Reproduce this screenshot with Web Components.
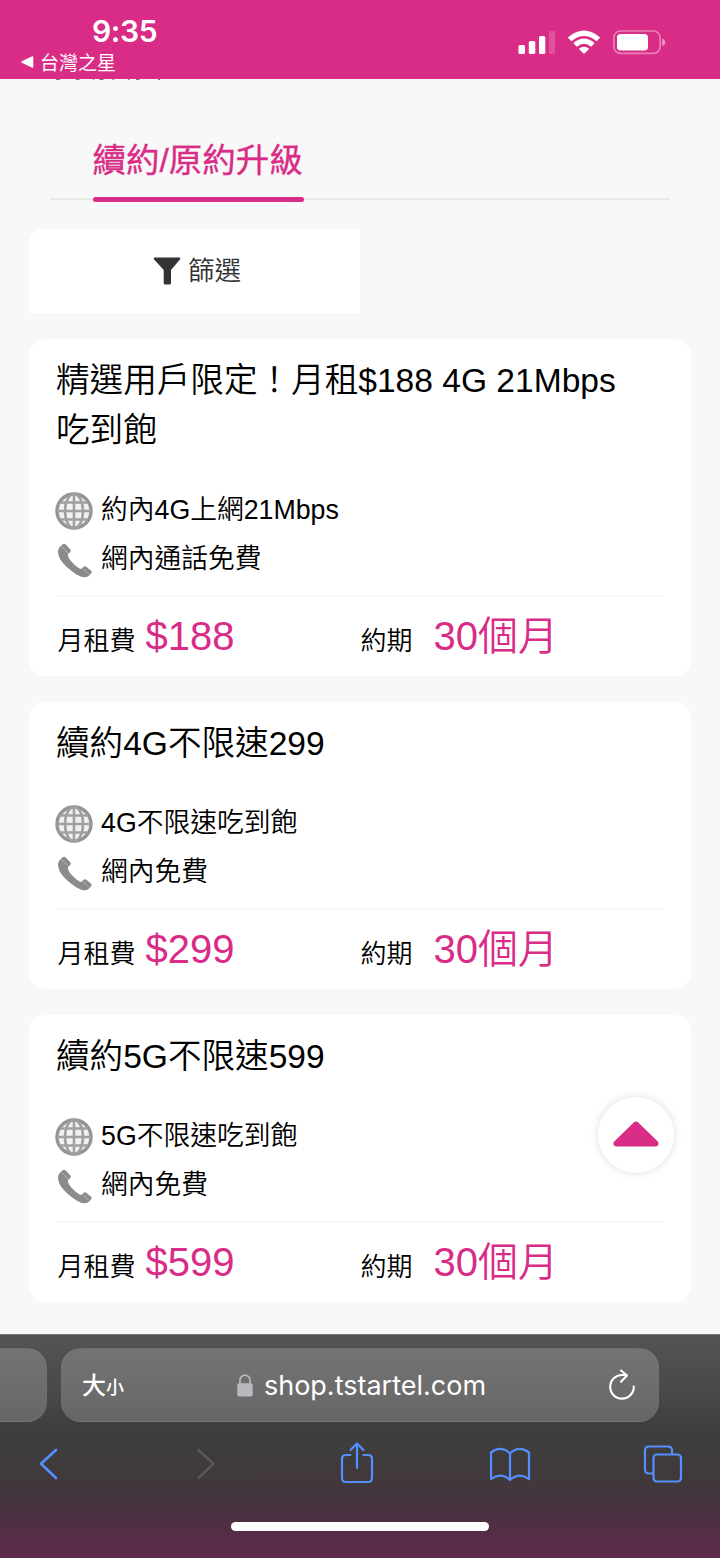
<!DOCTYPE html>
<html lang="zh-Hant">
<head>
<meta charset="utf-8">
<title>台灣之星</title>
<style>
html,body{margin:0;padding:0}
body{width:720px;height:1558px;overflow:hidden;background:#f8f8f8;--pink:#d92c87;font-family:"Liberation Sans","Noto Sans CJK TC",sans-serif;font-weight:350;color:#000}
</style>
</head>
<body>
<phone-screen></phone-screen>
<script>
const define = (name, html) => {
  const t = document.createElement('template');
  t.innerHTML = html;
  customElements.define(name, class extends HTMLElement {
    constructor() { super(); this.attachShadow({mode: 'open'}).append(t.content.cloneNode(true)); }
  });
};

define('status-bar', `<style>
:host{display:flex;justify-content:space-between;box-sizing:border-box;height:79px;background:var(--pink);color:#fff;padding:0 54px 0 20px}
.left{display:flex;flex-direction:column}
.time{font:600 30px/36px Inter,sans-serif;padding:13px 0 0 72px;letter-spacing:-.4px;height:36px}
.back{display:flex;align-items:center;font:400 19px/26px "Noto Sans CJK TC",sans-serif;gap:6px;white-space:nowrap}
.right{display:flex;padding-top:29px}
</style>
<div class="left"><div class="time">9:35</div><div class="back"><svg width="14" height="14" viewBox="0 0 14 14"><path d="M12.600 2v10L2 7z" fill="#fff" stroke="#fff" stroke-width="1.400" stroke-linejoin="round"/></svg><span>台灣之星</span></div></div>
<div class="right"><svg width="148" height="28" viewBox="518 29 148 28" fill="#fff">
<rect x="518.5" y="45" width="6.5" height="9" rx="1.6"/><rect x="528.8" y="41" width="6.5" height="13" rx="1.6"/><rect x="539" y="36" width="6.3" height="18" rx="1.6"/><rect x="549" y="31" width="6" height="23" rx="1.6" opacity=".18"/>
<path d="M567.8 37.6Q584 23.5 600.2 37.6L596.6 41.2Q584 30.9 571.4 41.2zM573.3 43.1Q584 34 594.7 43.1L591.2 46.7Q584 40.8 576.8 46.7zM578.8 48.7Q584 45 589.2 48.7L584.8 53.2Q584 54 583.2 53.2z"/>
<rect x="613.8" y="31" width="46.4" height="22.4" rx="6.8" fill="none" stroke="#fff" stroke-width="1.7" opacity=".4"/><rect x="617" y="34" width="31" height="16.5" rx="3.5"/><path d="M662.2 38.7Q665.3 39.7 665.3 42.3T662.2 46z" opacity=".5"/></svg></div>`);

define('section-tab', `<style>
:host{display:flex;flex-direction:column;margin:0 50px;height:121px;border-bottom:2px solid #e9e9e9;box-sizing:border-box}
.scrolled{display:block;height:2px;flex:none}
.wrap{width:211px;margin:33px 0 0 42.500px;height:88px;flex:none;display:flex;flex-direction:column;justify-content:space-between}
.name{font:400 33.500px/42px "Liberation Sans","Noto Sans CJK TC",sans-serif;-webkit-text-stroke:.35px var(--pink);color:var(--pink);white-space:nowrap;margin-top:26px}
.line{height:5px;border-radius:3px;background:var(--pink)}
</style>
<svg class="scrolled" width="120" height="2" viewBox="50 0 120 2" fill="#222" opacity=".8"><path d="M56 0h4v.8h-4zM76 0h3.500v.8H76zM93 0h1v.8h-1zM99.500 0h4v.8h-4zM112.500 0h1.500v.8h-1.500zM128 0h1.500v.8H128zM136 0h3.500v.8H136zM158 0h2v.8h-2z"/></svg>
<div class="wrap"><div class="name"><slot></slot></div><div class="line"></div></div>`);

define('filter-button', `<style>
:host{display:flex;align-items:center;justify-content:center;width:331px;height:84px;margin:29px 0 0 29px;background:#fff;border-radius:15px 0 0 0;color:#333;font-size:26.5px;line-height:34px;gap:7px;padding-left:5px;box-sizing:border-box}
</style><svg width="28" height="28" viewBox="0 0 28 28"><path d="M1.5.5h25q1.2.3.6 1.7L18 13v13.2q0 1.3-1.3 1.3h-4.6q-1.4 0-1.4-1.3V13L.9 2.2Q.2.9 1.5.5z" fill="#333"/></svg><span><slot></slot></span>`);

define('plan-feature', `<style>
:host{display:flex;align-items:center;height:49px;font-size:26.75px;line-height:46px;white-space:nowrap}
svg{flex:none;margin:4px 8px 0 -1px}
span{padding-top:3px}
.phone,:host([kind=call]) .globe{display:none}:host([kind=call]) .phone{display:block}
</style>
<svg class="globe" width="38" height="38" viewBox="0 0 38 38" fill="none" stroke="#a0a0a0" stroke-width="2.600"><circle cx="19" cy="19" r="17" stroke="#959595" stroke-width="3.400" fill="#f1f1f1"/><ellipse cx="19" cy="19" rx="9" ry="17"/><path d="M19 2v34M2 19h34M5 10.5h28M5 27.5h28"/></svg>
<svg class="phone" width="38" height="38" viewBox="0 0 38 38" fill="#8b8b8b"><path d="M4.3 6.6 7.7 3.3Q9.2 2.2 10.7 3.6L15.3 8.3Q16.5 9.7 15.2 11L13 13.2Q12.300 16 16.800 21Q22.500 27 26 28L29 25.600Q30.200 24.800 31.300 25.800L36.400 30Q37.200 31.300 36 32.500L33.300 35.200Q29 38 21.600 33.500Q10 26 5.300 18.500Q1.400 10.700 4.300 6.600z"/><path d="m6.500 5.500 7.500 7.500M27.500 27.300l6.500 6" stroke="#fff" stroke-width=".8" opacity=".4"/></svg>
<span><slot></slot></span>`);

define('plan-card', `<style>
:host{display:block;box-sizing:border-box;margin:26px 29px 0;padding:17px 27px 0;background:#fff;border-radius:16px;height:287px}
:host([tall]){height:337px}
h2{margin:0 0 28px;padding-right:24px;font-size:33.6px;line-height:50px;font-weight:350}
.foot{display:grid;grid-template-columns:1fr 1fr;height:80px;margin-top:13px;border-top:2px solid #f7f7f7;box-sizing:border-box}
</style><h2><slot name="title"></slot></h2><slot></slot><div class="foot"><slot name="foot"></slot></div>`);

define('plan-value', `<style>
:host{display:flex;align-items:center;height:78px;font-size:40px;line-height:76px;color:var(--pink);white-space:nowrap;padding-left:1.5px}
:host([wide]){padding-left:.5px}
.label{font-size:26px;line-height:36px;color:#000;margin:10px 10px 0 0}
:host([wide]) .label{margin-right:21px}
</style><span class="label"><slot name="label"></slot></span><span><slot></slot></span>`);

define('top-button', `<style>
:host{position:absolute;left:598px;top:1097px;width:76px;height:76px;border-radius:50%;background:#fff;box-shadow:0 0 8px rgba(0,0,0,.14);display:flex;align-items:center;justify-content:center}
svg{margin-top:-3px}
</style><svg width="46" height="26" viewBox="0 0 46 26"><path d="M20.7 1.6Q23-.8 25.3 1.6L45 20.7Q47 24.5 43 25.5H3Q-1 24.5 1 20.7z" fill="#d92c87"/></svg>`);

define('browser-bar', `<style>
:host{display:flex;flex-direction:column;box-sizing:border-box;height:224px;color:#fff;border-top:1px solid #777;background:linear-gradient(#545454 0,#494949 25%,#3e3e3e 43%,#3f3b3c 58%,#45343e 76%,#562c47 90%,#602b4c 100%)}
.tabs{display:flex;gap:14px;margin-top:13px;height:74px}
.prev,.address{box-sizing:border-box;background:linear-gradient(#747474,#666);border:1px solid #7a7a7a66}
.prev{width:47px;border-radius:0 20px 20px 0;border-left:0}
.address{width:598px;border-radius:20px;display:flex;align-items:center;justify-content:space-between;padding:0 22px 0 20px}
.size{font:500 24px/30px "Noto Sans CJK TC",sans-serif;width:60px;white-space:nowrap}.size small{font-size:18px}
.url{display:flex;align-items:center;gap:11px;font:400 27px/36px Inter,sans-serif;letter-spacing:0;margin:2px 0 0 -27px;white-space:nowrap}
.tools{display:flex;height:86px;align-items:center}
.home{width:258px;height:9px;border-radius:5px;background:#fff;margin:14px 0 0 231px}
</style>
<div class="tabs"><div class="prev"></div><div class="address"><span class="size">大<small>小</small></span>
<span class="url"><svg width="16" height="24" viewBox="0 0 16 24"><rect x=".3" y="9.3" width="15.4" height="13.2" rx="2" fill="#bab8bf"/><path d="M3 10V6.2a5 5 0 0 1 10 0V10" fill="none" stroke="#bab8bf" stroke-width="1.7"/></svg><span>shop.tstartel.com</span></span>
<svg width="28" height="34" viewBox="0 0 28 34" fill="none" stroke="#fff" stroke-width="2.1" stroke-linecap="round" stroke-linejoin="round"><path d="M25.8 18.5a11.8 11.8 0 1 1-11.5-11.5h4.5M13 2.5l6 5-6 6.2"/></svg></div></div>
<div class="tools"><svg width="720" height="86" viewBox="0 1422 720 86" fill="none" stroke="#548fff" stroke-width="2.2" stroke-linecap="round" stroke-linejoin="round">
<path d="M56 1450 41 1463.8 56 1478" stroke-width="2.6"/><path d="m198.500 1450 15 13.800-15 14.200" stroke="#5b585a" stroke-width="2.4"/>
<path d="M350.500 1455H346q-4 0-4 4v19q0 4 4 4h22q4 0 4-4v-19q0-4-4-4h-4.500M357 1468v-24.500M350.500 1450l6.500-6.500 6.500 6.500"/>
<path d="M510 1453.500Q501 1445 491 1452.500V1479Q501 1472 510 1480Q519 1472 529 1479V1452.500Q519 1445 510 1453.500V1480"/>
<rect x="653.500" y="1454.500" width="27.500" height="27" rx="3.500"/><path d="M653 1473.500h-4q-4 0-4-4v-19q0-4 4-4h19q4 0 4 4v3.500"/></svg></div>
<div class="home"></div>`);

const cards = [
  [true, '精選用戶限定！月租$188 4G 21Mbps 吃到飽', '約內4G上網21Mbps', '網內通話免費', '$188'],
  [false, '續約4G不限速299', '4G不限速吃到飽', '網內免費', '$299'],
  [false, '續約5G不限速599', '5G不限速吃到飽', '網內免費', '$599']
].map(([tall, title, data, call, fee]) => `<plan-card ${tall ? 'tall' : ''}><span slot="title">${title}</span>
<plan-feature>${data}</plan-feature><plan-feature kind="call">${call}</plan-feature>
<plan-value slot="foot"><span slot="label">月租費</span>${fee}</plan-value><plan-value slot="foot" wide><span slot="label">約期</span>30個月</plan-value></plan-card>`).join('');

define('phone-screen', `<style>
:host{display:flex;flex-direction:column;width:720px;height:1558px;position:relative;overflow:hidden}
main{height:1255px;display:flow-root;background:#f8f8f8}
</style><status-bar></status-bar><main><section-tab>續約/原約升級</section-tab><filter-button>篩選</filter-button>${cards}</main><browser-bar></browser-bar><top-button></top-button>`);
</script>
</body>
</html>
